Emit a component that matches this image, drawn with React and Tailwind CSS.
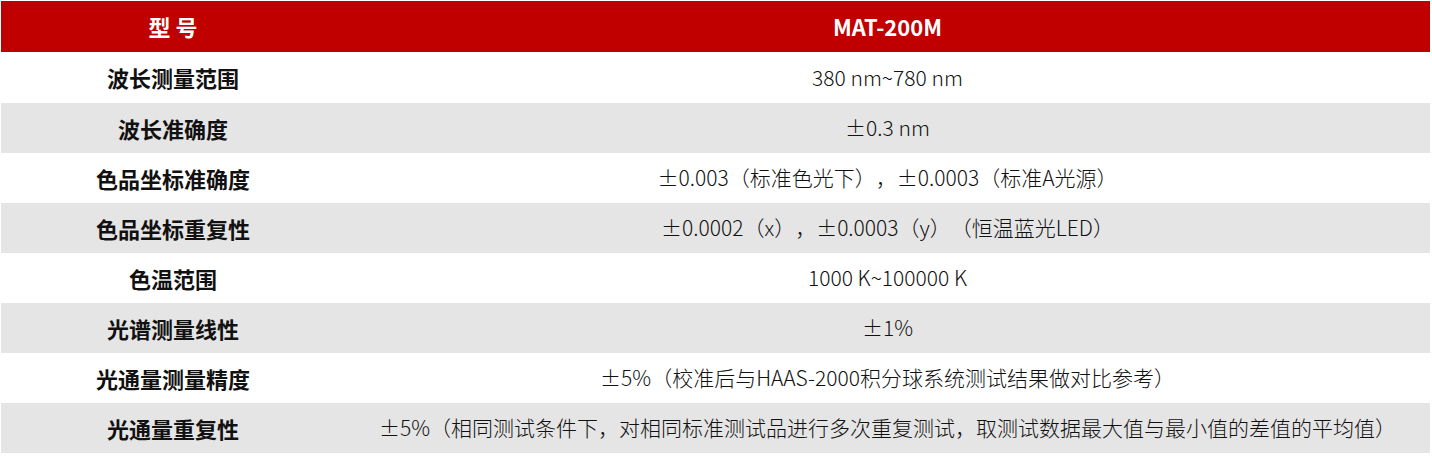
export default function App() {
  const rows = [
    ["波长测量范围", "380 nm~780 nm"],
    ["波长准确度", "±0.3 nm"],
    ["色品坐标准确度", "±0.003（标准色光下），±0.0003（标准A光源）"],
    ["色品坐标重复性", "±0.0002（x），±0.0003（y）（恒温蓝光LED）"],
    ["色温范围", "1000 K~100000 K"],
    ["光谱测量线性", "±1%"],
    ["光通量测量精度", "±5%（校准后与HAAS-2000积分球系统测试结果做对比参考）"],
    ["光通量重复性", "±5%（相同测试条件下，对相同标准测试品进行多次重复测试，取测试数据最大值与最小值的差值的平均值）"],
  ];
  return (
    <div
      className="w-[1432px] h-[456px] bg-white pt-px pl-px pr-[2px] [text-spacing-trim:space-all]"
      style={{ fontFamily: '"Noto Sans CJK SC", "Noto Sans", sans-serif' }}
    >
      <div className="flex flex-col">
        <div className="flex h-[51px] bg-[#c00000] text-white font-bold text-[22px]">
          <div className="w-[344px] flex items-center justify-center">型 号</div>
          <div className="flex-1 flex items-center justify-center">MAT-200M</div>
        </div>
        {rows.map((r, i) => (
          <div
            key={i}
            className={
              "flex text-[#111] " +
              (i === 0 ? "h-[51px] " : "h-[50px] ") +
              (i % 2 === 1 ? "bg-[#e5e5e5]" : "bg-white")
            }
          >
            <div className="w-[344px] flex items-center justify-center font-bold text-[22px]">{r[0]}</div>
            <div className="flex-1 flex items-center justify-center font-light text-[21px]">{r[1]}</div>
          </div>
        ))}
      </div>
    </div>
  );
}
